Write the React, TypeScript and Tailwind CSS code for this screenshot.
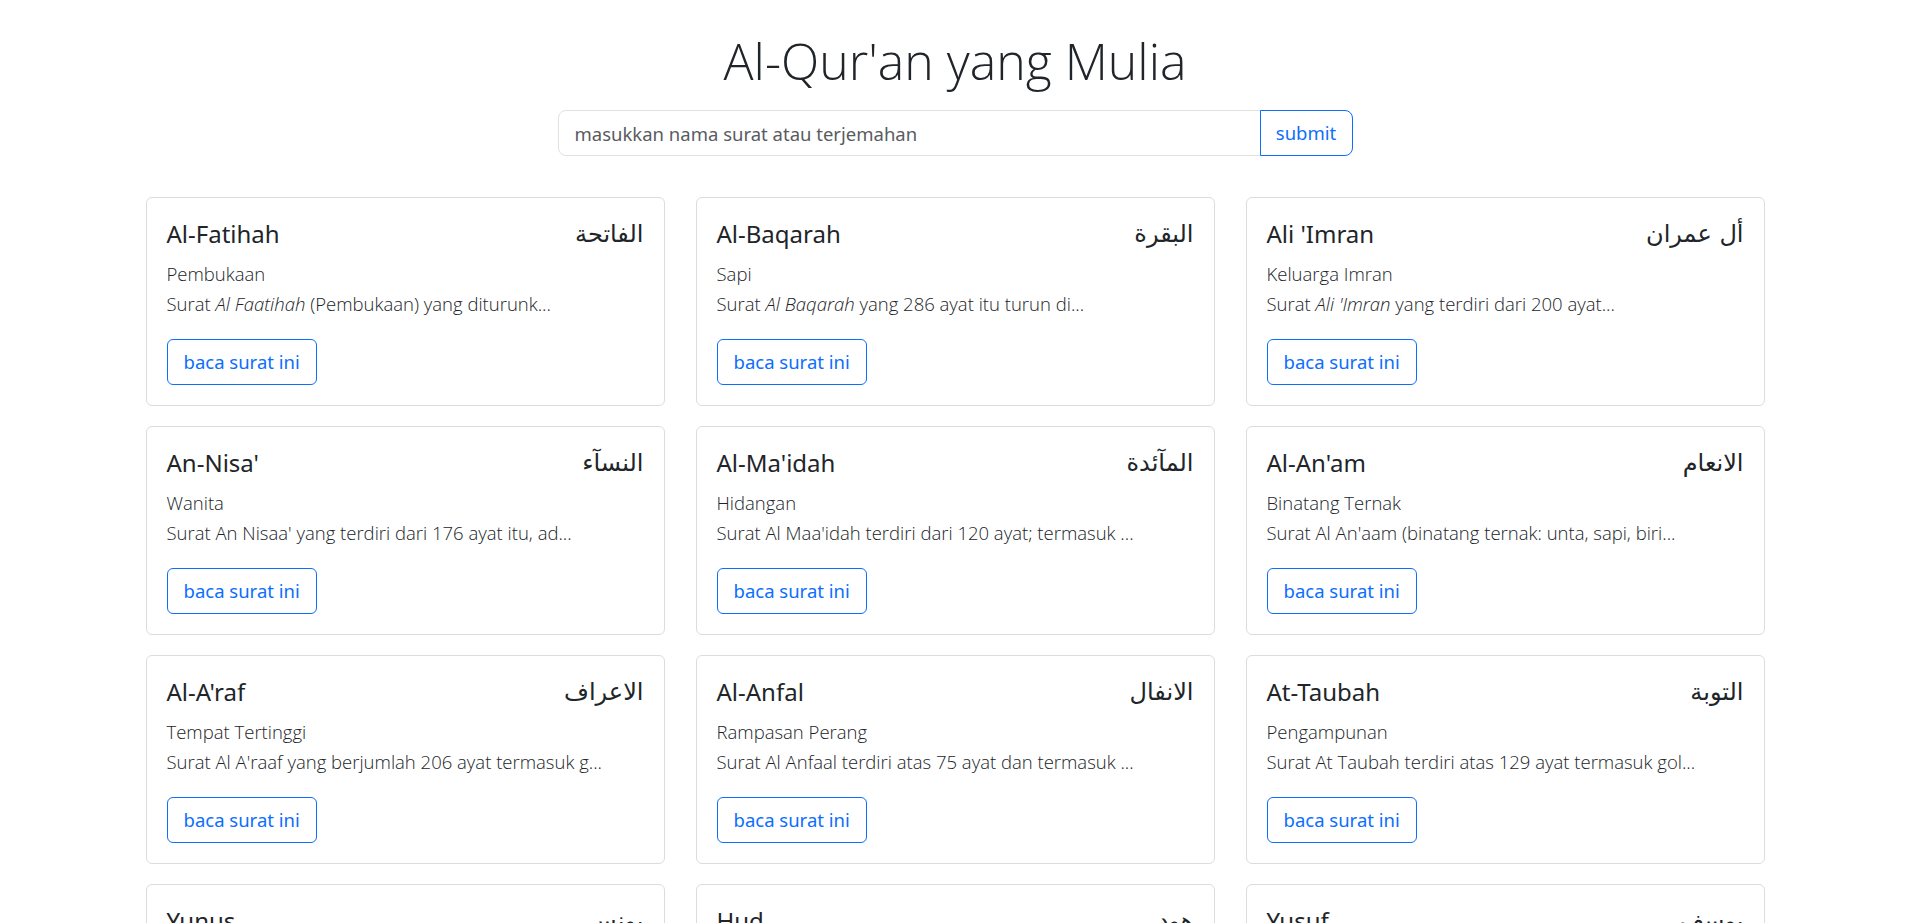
type Surah = {
  latin: string;
  arabic: string;
  meaning: string;
  desc: React.ReactNode;
};

const surahs: Surah[] = [
  {
    latin: "Al-Fatihah",
    arabic: "الفاتحة",
    meaning: "Pembukaan",
    desc: (
      <>
        Surat <i>Al Faatihah</i> (Pembukaan) yang diturunk...
      </>
    ),
  },
  {
    latin: "Al-Baqarah",
    arabic: "البقرة",
    meaning: "Sapi",
    desc: (
      <>
        Surat <i>Al Baqarah</i> yang 286 ayat itu turun di...
      </>
    ),
  },
  {
    latin: "Ali 'Imran",
    arabic: "أل عمران",
    meaning: "Keluarga Imran",
    desc: (
      <>
        Surat <i>Ali 'Imran</i> yang terdiri dari 200 ayat...
      </>
    ),
  },
  {
    latin: "An-Nisa'",
    arabic: "النسآء",
    meaning: "Wanita",
    desc: "Surat An Nisaa' yang terdiri dari 176 ayat itu, ad...",
  },
  {
    latin: "Al-Ma'idah",
    arabic: "المآئدة",
    meaning: "Hidangan",
    desc: "Surat Al Maa'idah terdiri dari 120 ayat; termasuk ...",
  },
  {
    latin: "Al-An'am",
    arabic: "الانعام",
    meaning: "Binatang Ternak",
    desc: "Surat Al An'aam (binatang ternak: unta, sapi, biri...",
  },
  {
    latin: "Al-A'raf",
    arabic: "الاعراف",
    meaning: "Tempat Tertinggi",
    desc: "Surat Al A'raaf yang berjumlah 206 ayat termasuk g...",
  },
  {
    latin: "Al-Anfal",
    arabic: "الانفال",
    meaning: "Rampasan Perang",
    desc: "Surat Al Anfaal terdiri atas 75 ayat dan termasuk ...",
  },
  {
    latin: "At-Taubah",
    arabic: "التوبة",
    meaning: "Pengampunan",
    desc: "Surat At Taubah terdiri atas 129 ayat termasuk gol...",
  },
  {
    latin: "Yunus",
    arabic: "يونس",
    meaning: "Nabi Yunus",
    desc: "Surat Yunus terdiri atas 109 ayat, termasuk golon...",
  },
  {
    latin: "Hud",
    arabic: "هود",
    meaning: "Nabi Hud",
    desc: "Surat Huud termasuk golongan surat-surat Makkiyya...",
  },
  {
    latin: "Yusuf",
    arabic: "يوسف",
    meaning: "Nabi Yusuf",
    desc: "Surat Yusuf ini terdiri atas 111 ayat, termasuk g...",
  },
];

function SurahCard({ surah }: { surah: Surah }) {
  return (
    <div className="rounded-[6px] border border-[#dcdcdc] bg-white p-5">
      <div className="flex h-[32px] items-center justify-between text-[#212529]">
        <h4 className="text-[24px] leading-[32px]">{surah.latin}</h4>
        <span
          dir="rtl"
          className="font-['DejaVu_Sans',sans-serif] text-[24px] leading-[32px]"
        >
          {surah.arabic}
        </span>
      </div>
      <div className="mt-[9px] font-['Open_Sans','Noto_Sans',sans-serif] text-[18.5px] font-light leading-[30px] text-[#212529]">
        <p>{surah.meaning}</p>
        <p>{surah.desc}</p>
      </div>
      <button className="mt-5 h-[46px] rounded-[6px] border border-[#0d6efd] px-4 text-[18.5px] text-[#0d6efd]">
        baca surat ini
      </button>
    </div>
  );
}

export default function App() {
  return (
    <div className="min-h-screen bg-white font-['Noto_Sans','DejaVu_Sans',sans-serif]">
      <div className="mx-auto w-[1619px] pt-[30px] pb-10">
        <h1 className="text-center font-['Open_Sans','Noto_Sans',sans-serif] text-[50px] font-[350] leading-[62px] text-[#212529]">
          Al-Qur'an yang Mulia
        </h1>

        <form className="mx-auto mt-[18px] flex w-[795px]">
          <input
            type="text"
            placeholder="masukkan nama surat atau terjemahan"
            className="h-[46px] min-w-0 flex-1 rounded-l-[8px] border border-[#dee2e6] px-4 text-[18.5px] text-[#212529] outline-none placeholder:text-[#595c5f]"
          />
          <button
            type="button"
            className="-ml-px h-[46px] w-[93px] rounded-r-[8px] border border-[#0d6efd] text-[18.5px] text-[#0d6efd]"
          >
            submit
          </button>
        </form>

        <div className="mt-[41px] grid grid-cols-3 gap-x-[31px] gap-y-[20px]">
          {surahs.map((surah) => (
            <SurahCard key={surah.latin} surah={surah} />
          ))}
        </div>
      </div>
    </div>
  );
}
